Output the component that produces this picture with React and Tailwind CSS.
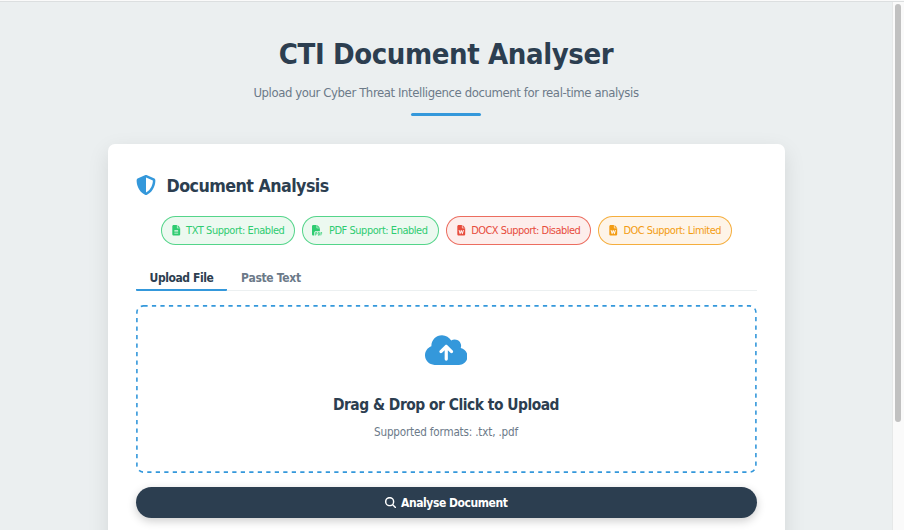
import {
  FaShieldHalved,
  FaFileLines,
  FaFilePdf,
  FaFileWord,
  FaCloudArrowUp,
  FaMagnifyingGlass,
} from "react-icons/fa6";

const formats = [
  { label: "TXT Support: Enabled", Icon: FaFileLines, look: "w-[134px] border-[#2ecc71]/80 bg-[#ecf9f0] text-[#2ecc71]", text: "tracking-[-0.42px]" },
  { label: "PDF Support: Enabled", Icon: FaFilePdf, look: "w-[137px] border-[#2ecc71]/80 bg-[#ecf9f0] text-[#2ecc71]", text: "pl-px tracking-[-0.44px]" },
  { label: "DOCX Support: Disabled", Icon: FaFileWord, look: "w-[145px] border-[#e74c3c]/80 bg-[#fdeeec] text-[#e74c3c]", text: "tracking-[-0.5px]" },
  { label: "DOC Support: Limited", Icon: FaFileWord, look: "w-[134px] border-[#f39c12]/80 bg-[#fef4e8] text-[#f39c12]", text: "tracking-[-0.49px]" },
];

function Header() {
  return (
    <header className="flex flex-col items-center">
      <h1 className="mt-[34px] text-[29px] leading-[36px] font-bold tracking-[-0.4px] whitespace-nowrap text-[#2c3e50]">
        CTI Document Analyser
      </h1>
      <p className="mt-[12px] text-[13px] leading-[18px] tracking-[-0.4px] whitespace-nowrap text-[#6c7a89]">
        Upload your Cyber Threat Intelligence document for real-time analysis
      </p>
      <div className="mt-[11px] h-[3px] w-[70px] rounded-full bg-[#3498db]" />
    </header>
  );
}

function Tabs() {
  return (
    <div className="mt-[18px] flex h-[28px] border-b border-[#ecf0f1] text-[12px] leading-[30px] font-bold">
      <div className="h-[28px] w-[91px] rounded-[1px] border-b-2 border-[#3498db] pl-px text-center tracking-[-0.42px] text-[#2c3e50]">Upload File</div>
      <div className="w-[88px] pl-px text-center tracking-[-0.3px] text-[#6c7a89]">Paste Text</div>
    </div>
  );
}

function DropZone() {
  return (
    <div className="relative mt-[14px] flex h-[168px] flex-col items-center">
      <svg className="absolute inset-0 size-full" fill="none">
        <rect x="0.9" y="0.9" width="619" height="166.2" rx="6.5" stroke="#3498db" strokeWidth="1.6" strokeDasharray="4.25 4.25" />
      </svg>
      <FaCloudArrowUp className="mt-[26px] h-[38px] w-[42.5px] text-[#3498db]" />
      <h3 className="mt-[26px] text-[15.4px] leading-[20px] font-bold tracking-[-0.48px] text-[#2c3e50]">
        Drag &amp; Drop or Click to Upload
      </h3>
      <p className="mt-[9px] text-[11.6px] leading-[16px] tracking-[-0.18px] text-[#6c7a89]">Supported formats: .txt, .pdf</p>
    </div>
  );
}

export default function App() {
  return (
    <div className="flex h-[530px] w-[904px] flex-col overflow-hidden bg-[#fafafa] font-['DejaVu_Sans_Condensed','DejaVu_Sans',sans-serif]">
      <div className="mt-px flex h-[529px] border-t border-[#dcdfe0] bg-[#ebeff0]">
        <div className="w-[892px]">
          <Header />
          <main className="mx-auto mt-[28px] h-[500px] w-[677px] rounded-t-[7px] bg-white px-[28px] pt-[27px] shadow-[0_7px_21px_rgba(0,0,0,0.1)]">
            <div className="flex h-[28px] items-center gap-[11px]">
              <FaShieldHalved className="size-[20px] text-[#3498db]" />
              <h2 className="pt-px text-[17.7px] leading-[24px] font-bold tracking-[-0.54px] text-[#2c3e50]">Document Analysis</h2>
            </div>
            <div className="mt-[17px] flex justify-center gap-[7px]">
              {formats.map(({ label, Icon, look, text }) => (
                <div key={label} className={`flex h-[29px] items-center justify-center gap-[5px] rounded-full border text-[10.95px] ${look}`}>
                  <Icon className="size-[10.5px] shrink-0" />
                  <span className={`pt-[2px] whitespace-nowrap ${text}`}>{label}</span>
                </div>
              ))}
            </div>
            <Tabs />
            <DropZone />
            <button className="mt-[14px] flex h-[31px] w-full items-center justify-center gap-[5px] rounded-full bg-[#2c3e50] text-[12px] font-bold tracking-[-0.44px] text-white shadow-[0_3px_10px_rgba(0,0,0,0.2)]">
              <FaMagnifyingGlass className="size-[11.5px]" />
              <span className="pt-px">Analyse Document</span>
            </button>
          </main>
        </div>
        <div className="w-[12px] border-l border-[#e6e8e8] bg-[#fafafa] pt-[2px] pl-[2px]">
          <div className="h-[418px] w-[6px] rounded-full bg-[#c1c1c1]" />
        </div>
      </div>
    </div>
  );
}
